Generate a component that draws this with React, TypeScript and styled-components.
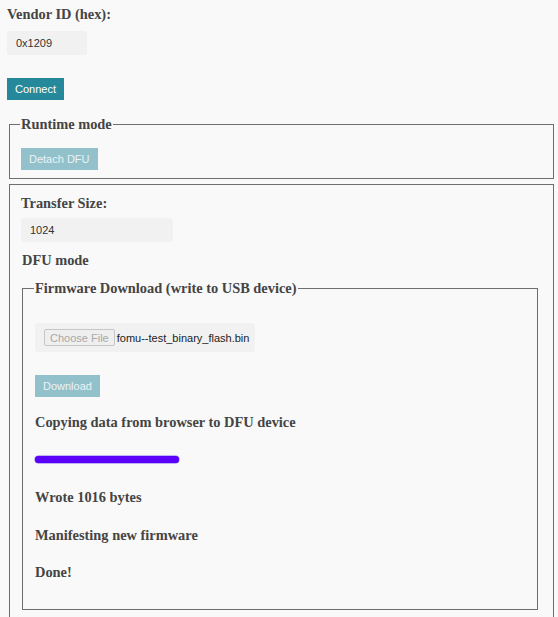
import React from 'react'
import styled, { createGlobalStyle } from 'styled-components'

const Global = createGlobalStyle`
  html, body { margin: 0; background: #f9f9f9; }
  body { font-family: "Liberation Serif", "Times New Roman", serif; color: #444; }
`

const Page = styled.div`
  padding: 6px 2px 0 7px;
`

const Label = styled.div<{ $indent?: number }>`
  font-weight: bold;
  font-size: 14.4px;
  line-height: 16px;
  margin-left: ${p => p.$indent ?? 0}px;
`

const Field = styled.div<{ $w: number }>`
  width: ${p => p.$w}px;
  height: 24px;
  box-sizing: border-box;
  background: #f1f1f1;
  border-radius: 3px;
  padding: 0 9px;
  display: flex;
  align-items: center;
  font: 11px "Liberation Sans", Arial, sans-serif;
  color: #333;
`

const Button = styled.button<{ $dim?: boolean }>`
  display: block;
  border: 0;
  border-radius: 0;
  height: 22px;
  padding: 0 8px;
  font: 11px "Liberation Sans", Arial, sans-serif;
  color: ${p => (p.$dim ? '#eaf3f5' : '#fff')};
  background: ${p => (p.$dim ? '#92c1cc' : '#25899b')};
`

const Fieldset = styled.fieldset<{ $nested?: boolean; $top?: number; $bottom?: number }>`
  margin: ${p => (p.$nested ? '0 4px 0 1px' : '0 2px')};
  border: 1px solid #6e6e6e;
  padding: ${p => p.$top ?? 0}px ${p => (p.$nested ? 12 : 11)}px ${p => p.$bottom ?? 8}px;
  min-width: 0;
`

const Legend = styled.legend`
  font-weight: bold;
  font-size: 14.4px;
  line-height: 16px;
  padding: 0 1px;
  margin-left: -1px;
`

const FileBox = styled.div`
  width: 220px;
  height: 29px;
  box-sizing: border-box;
  background: #f1f1f1;
  border-radius: 3px;
  padding: 0 9px;
  display: flex;
  align-items: center;
  gap: 2px;
  white-space: nowrap;
  font: 11px "Liberation Sans", Arial, sans-serif;
  color: #222;
`

const FileButton = styled.span`
  flex-shrink: 0;
  height: 17px;
  box-sizing: border-box;
  padding: 0 5px;
  display: flex;
  align-items: center;
  border: 1px solid #c6c6c6;
  border-radius: 2px;
  background: #efefef;
  color: #a8a8a8;
`

const Progress = styled.div`
  width: 144px;
  height: 7px;
  border-radius: 4px;
  background: #5b00fa;
  box-shadow: 0 0 0 0.5px #8a70f0;
`

const Gap = styled.div<{ $h: number }>`
  height: ${p => p.$h}px;
`

export default function App() {
  return (
    <Page>
      <Global />
      <Label>Vendor ID (hex):</Label>
      <Gap $h={9} />
      <Field $w={80}>0x1209</Field>
      <Gap $h={23} />
      <Button>Connect</Button>
      <Gap $h={16} />
      <Fieldset>
        <Legend>Runtime mode</Legend>
        <Gap $h={16} />
        <Button $dim>Detach DFU</Button>
      </Fieldset>
      <Gap $h={5} />
      <Fieldset $top={10}>
        <Label>Transfer Size:</Label>
        <Gap $h={7} />
        <Field $w={152}>1024</Field>
        <Gap $h={10} />
        <Label $indent={1}>DFU mode</Label>
        <Gap $h={12} />
        <Fieldset $nested $bottom={29}>
          <Legend>Firmware Download (write to USB device)</Legend>
          <Gap $h={27} />
          <FileBox>
            <FileButton>Choose File</FileButton>
            fomu--test_binary_flash.bin
          </FileBox>
          <Gap $h={23} />
          <Button $dim>Download</Button>
          <Gap $h={17} />
          <Label>Copying data from browser to DFU device</Label>
          <Gap $h={26} />
          <Progress />
          <Gap $h={26} />
          <Label>Wrote 1016 bytes</Label>
          <Gap $h={22} />
          <Label>Manifesting new firmware</Label>
          <Gap $h={21} />
          <Label>Done!</Label>
        </Fieldset>
        <Gap $h={20} />
      </Fieldset>
    </Page>
  )
}
